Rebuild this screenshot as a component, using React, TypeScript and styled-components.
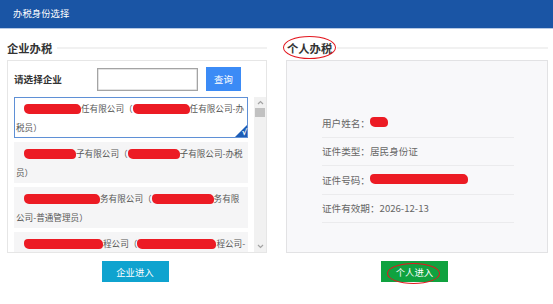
import React from "react";
import styled, { createGlobalStyle } from "styled-components";

const GlobalStyle = createGlobalStyle`
  html, body { margin: 0; padding: 0; background: #ffffff; }
  body {
    width: 553px;
    height: 304px;
    overflow: hidden;
    font-family: "Noto Sans CJK SC", "Noto Sans", "Liberation Sans", sans-serif;
  }
  * { box-sizing: border-box; }
`;

const Header = styled.header`
  height: 29px;
  background: #1a55a5;
  border-bottom: 1px solid #b6c9e4;
  display: flex;
  align-items: center;
  padding-left: 13px;
`;

const HeaderTitle = styled.h1`
  margin: 0;
  font-size: 9.4px;
  font-weight: normal;
  color: #ffffff;
  line-height: 1;
`;

const Main = styled.main`
  display: grid;
  grid-template-columns: 260px 262px;
  column-gap: 19px;
  padding: 11px 0 0 7px;
`;

const Column = styled.section`
  display: flex;
  flex-direction: column;
`;

const SectionHead = styled.div`
  height: 16px;
  margin-bottom: 4px;
  display: flex;
  align-items: center;
  gap: 5px;
  &::after {
    content: "";
    flex: 1;
    height: 2px;
    background: #f1f1f1;
  }
`;

const SectionTitle = styled.h2<{ $offset?: number }>`
  position: relative;
  margin: 0 0 0 ${(p) => p.$offset ?? 0}px;
  font-size: 11.3px;
  font-weight: bold;
  color: #333333;
  line-height: 16px;
  white-space: nowrap;
`;

const Ellipse = styled.span<{ $l: number; $r: number; $t: number; $b: number }>`
  position: absolute;
  left: ${(p) => p.$l}px;
  right: ${(p) => p.$r}px;
  top: ${(p) => p.$t}px;
  bottom: ${(p) => p.$b}px;
  border: 1.4px solid #e3161e;
  border-radius: 50%;
  pointer-events: none;
`;

const Panel = styled.div<{ $tint?: boolean }>`
  height: 193px;
  border: 1px solid ${(p) => (p.$tint ? "#e2e2e4" : "#e6e6e6")};
  background: ${(p) => (p.$tint ? "#f8f8fa" : "#ffffff")};
`;

const CompanyPanel = styled(Panel)`
  display: flex;
  flex-direction: column;
  padding: 6px 0 0 6px;
  gap: 6px;
`;

const SearchRow = styled.div`
  height: 25px;
  display: flex;
  align-items: center;
`;

const SearchLabel = styled.label`
  width: 83px;
  font-size: 9.6px;
  font-weight: bold;
  color: #333333;
`;

const SearchInput = styled.input`
  width: 101px;
  height: 23px;
  border: 1px solid #a4a4a4;
  box-shadow: inset 0 0 0 0.5px #c8c8c8;
  padding: 0 4px;
  font-size: 9.6px;
  outline: none;
  margin-top: 1px;
`;

const SearchButton = styled.button`
  margin-left: 8px;
  width: 35px;
  height: 24px;
  border: none;
  background: #3b8bf6;
  color: #ffffff;
  font-family: inherit;
  font-size: 9.4px;
  padding: 0;
`;

const ListArea = styled.div`
  height: 155px;
  display: flex;
  gap: 6px;
`;

const Items = styled.ul`
  width: 234px;
  margin: 0;
  padding: 0;
  list-style: none;
  overflow: hidden;
  display: flex;
  flex-direction: column;
  gap: 4px;
`;

const Item = styled.li<{ $selected?: boolean }>`
  position: relative;
  flex-shrink: 0;
  border: 1px solid ${(p) => (p.$selected ? "#5f90d6" : "#f5f5f6")};
  background: ${(p) => (p.$selected ? "#ffffff" : "#f5f5f6")};
  padding: 1px 1px 0 1px;
  font-size: 8.6px;
  line-height: 19px;
  color: #555555;
  text-indent: 8px;
`;

const CheckCorner = styled.span`
  position: absolute;
  right: 0;
  bottom: 0;
  width: 0;
  height: 0;
  border-style: solid;
  border-width: 0 0 12px 12px;
  border-color: transparent transparent #1c5cb6 transparent;
  text-indent: 0;
`;

const CheckMark = styled.span`
  position: absolute;
  right: 0px;
  bottom: -13px;
  font-size: 8px;
  line-height: 10px;
  color: #ffffff;
  font-weight: bold;
  font-family: "DejaVu Sans", sans-serif;
`;

const Redact = styled.span<{ $w: number }>`
  display: inline-block;
  width: ${(p) => p.$w}px;
  height: 10px;
  vertical-align: middle;
  margin-top: -2px;
  background: #ec1b24;
  border-radius: 4px 5px 4px 5px;
  filter: blur(0.45px);
  text-indent: 0;
`;

const ScrollTrack = styled.div`
  width: 12px;
  background: #f1f1f1;
  display: flex;
  flex-direction: column;
  align-items: center;
`;

const ScrollArrow = styled.span`
  height: 11px;
  width: 12px;
  display: flex;
  align-items: center;
  justify-content: center;
`;

const ScrollThumb = styled.span`
  width: 10px;
  height: 9px;
  background: #c1c1c1;
`;

const ScrollSpacer = styled.span`
  flex: 1;
`;

const InfoPanel = styled(Panel)`
  padding: 48px 33px 0 35px;
`;

const InfoRow = styled.div`
  height: 28.5px;
  border-bottom: 1px solid #ebebed;
  display: flex;
  align-items: center;
  font-size: 9.6px;
  color: #666666;
  white-space: nowrap;
`;

const ButtonRow = styled.div`
  display: flex;
  justify-content: center;
  padding-top: 8px;
`;

const EnterButton = styled.button<{ $color: string; $shift: number }>`
  position: relative;
  width: 67px;
  height: 21px;
  margin-left: ${(p) => p.$shift}px;
  border: none;
  padding: 0;
  background: ${(p) => p.$color};
  color: #ffffff;
  font-family: inherit;
  font-size: 9.4px;
`;

type Part = string | number;

const companies: Part[][] = [
  [57, "任有限公司（", 57, "任有限公司-办税员）"],
  [52, "子有限公司（", 52, "子有限公司-办税员）"],
  [76, "务有限公司（", 62, "务有限公司-普通管理员）"],
  [79, "程公司（", 79, "程公司-普通管理员）"],
];

const Chevron = ({ up }: { up?: boolean }) => (
  <svg width="7" height="5" viewBox="0 0 7 5">
    <path
      d={up ? "M1 4 L3.5 1.5 L6 4" : "M1 1 L3.5 3.5 L6 1"}
      fill="none"
      stroke="#a3a3a3"
      strokeWidth="1.2"
    />
  </svg>
);

export default function App() {
  return (
    <>
      <GlobalStyle />
      <Header>
        <HeaderTitle>办税身份选择</HeaderTitle>
      </Header>
      <Main>
        <Column>
          <SectionHead>
            <SectionTitle>企业办税</SectionTitle>
          </SectionHead>
          <CompanyPanel>
            <SearchRow>
              <SearchLabel>请选择企业</SearchLabel>
              <SearchInput />
              <SearchButton>查询</SearchButton>
            </SearchRow>
            <ListArea>
              <Items>
                {companies.map((parts, i) => (
                  <Item key={i} $selected={i === 0}>
                    {parts.map((p, j) =>
                      typeof p === "number" ? <Redact key={j} $w={p} /> : <React.Fragment key={j}>{p}</React.Fragment>
                    )}
                    {i === 0 && (
                      <CheckCorner>
                        <CheckMark>√</CheckMark>
                      </CheckCorner>
                    )}
                  </Item>
                ))}
              </Items>
              <ScrollTrack>
                <ScrollArrow>
                  <Chevron up />
                </ScrollArrow>
                <ScrollThumb />
                <ScrollSpacer />
                <ScrollArrow>
                  <Chevron />
                </ScrollArrow>
              </ScrollTrack>
            </ListArea>
          </CompanyPanel>
          <ButtonRow>
            <EnterButton $color="#0fa3cf" $shift={-4}>企业进入</EnterButton>
          </ButtonRow>
        </Column>
        <Column>
          <SectionHead>
            <SectionTitle $offset={1}>
              个人办税
              <Ellipse $l={-4} $r={-4} $t={-4} $b={-3} />
            </SectionTitle>
          </SectionHead>
          <InfoPanel $tint>
            <InfoRow>
              用户姓名：<Redact $w={18} />
            </InfoRow>
            <InfoRow>证件类型：居民身份证</InfoRow>
            <InfoRow>
              证件号码：<Redact $w={98} />
            </InfoRow>
            <InfoRow>证件有效期：2026-12-13</InfoRow>
          </InfoPanel>
          <ButtonRow>
            <EnterButton $color="#10a23f" $shift={-5}>
              个人进入
              <Ellipse $l={6} $r={8} $t={2} $b={-2} />
            </EnterButton>
          </ButtonRow>
        </Column>
      </Main>
    </>
  );
}
